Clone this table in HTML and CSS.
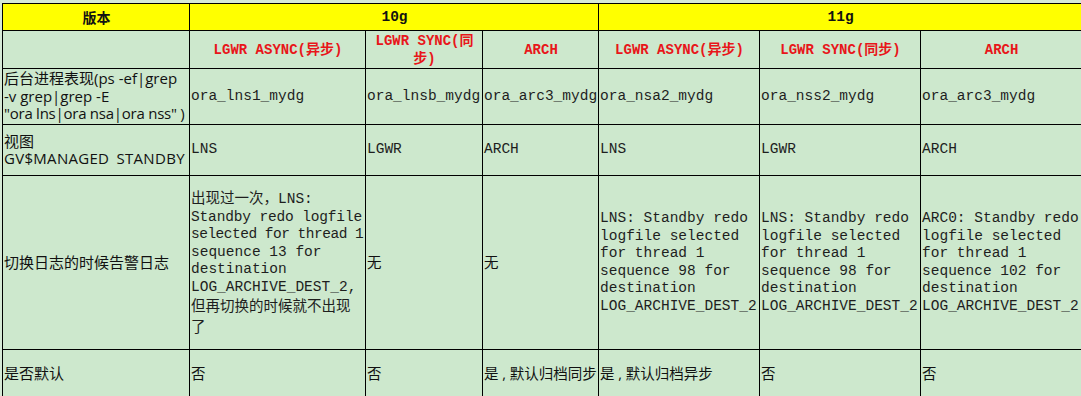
FILE: index.html
```html
<!DOCTYPE html>
<html lang="zh-CN">
<head>
<meta charset="utf-8">
<title>Data Guard 传输模式对比</title>
<link rel="stylesheet" href="styles.css">
</head>
<body>
<table class="cmp">
  <colgroup>
    <col class="c1"><col class="c2"><col class="c3"><col class="c4"><col class="c5"><col class="c6"><col class="c7">
  </colgroup>
  <tr class="r1">
    <th class="h-ver">版本</th>
    <th class="h-mono" colspan="3">10g</th>
    <th class="h-mono" colspan="3">11g</th>
  </tr>
  <tr class="r2">
    <td></td>
    <td class="mode">LGWR ASYNC(异步)</td>
    <td class="mode">LGWR SYNC(同步)</td>
    <td class="mode">ARCH</td>
    <td class="mode">LGWR ASYNC(异步)</td>
    <td class="mode">LGWR SYNC(同步)</td>
    <td class="mode">ARCH</td>
  </tr>
  <tr class="r3">
    <td class="sans lead">后台进程表现(ps -ef|grep<br>-v grep|grep -E<br><span class="fit">"ora lns|ora nsa|ora nss" )</span></td>
    <td class="mono">ora_lns1_mydg</td>
    <td class="mono">ora_lnsb_mydg</td>
    <td class="mono">ora_arc3_mydg</td>
    <td class="mono">ora_nsa2_mydg</td>
    <td class="mono">ora_nss2_mydg</td>
    <td class="mono">ora_arc3_mydg</td>
  </tr>
  <tr class="r4">
    <td class="sans lead">视图<br><span class="wide">GV$MANAGED STANDBY</span></td>
    <td class="mono">LNS</td>
    <td class="mono">LGWR</td>
    <td class="mono">ARCH</td>
    <td class="mono">LNS</td>
    <td class="mono">LGWR</td>
    <td class="mono">ARCH</td>
  </tr>
  <tr class="r5">
    <td class="sans lead">切换日志的时候告警日志</td>
    <td class="mono"><span class="cjk">出现过一次，</span>LNS:<br><span class="t1">Standby redo logfile</span><br><span class="t2">selected for thread 1</span><br>sequence 13 for<br>destination<br>LOG_ARCHIVE_DEST_2,<br><span class="cjk">但再切换的时候就不出现<br>了</span></td>
    <td class="sans">无</td>
    <td class="sans">无</td>
    <td class="mono">LNS: Standby redo<br>logfile selected<br>for thread 1<br>sequence 98 for<br>destination<br>LOG_ARCHIVE_DEST_2</td>
    <td class="mono">LNS: Standby redo<br>logfile selected<br>for thread 1<br>sequence 98 for<br>destination<br>LOG_ARCHIVE_DEST_2</td>
    <td class="mono">ARC0: Standby redo<br>logfile selected<br>for thread 1<br>sequence 102 for<br>destination<br>LOG_ARCHIVE_DEST_2</td>
  </tr>
  <tr class="r6">
    <td class="sans lead">是否默认</td>
    <td class="sans">否</td>
    <td class="sans">否</td>
    <td class="sans">是 , 默认归档同步</td>
    <td class="sans">是 , 默认归档异步</td>
    <td class="sans">否</td>
    <td class="sans">否</td>
  </tr>
</table>
</body>
</html>
```
FILE: styles.css
```css
* { box-sizing: border-box; }
html, body { margin: 0; }
body {
  width: 1081px;
  height: 396px;
  overflow: hidden;
  padding: 3px 0 0 2px;
  background: #d6ead6;
}
.cmp {
  border-collapse: collapse;
  table-layout: fixed;
  width: 1079px;
  background: #cde8cd;
  color: #111;
}
.c1 { width: 187px; }
.c2 { width: 176px; }
.c3 { width: 117px; }
.c4 { width: 116px; }
.c5 { width: 161px; }
.c6 { width: 161px; }
.c7 { width: 161px; }

.cmp td, .cmp th {
  border: 1px solid #000;
  padding: 0 0 0 1px;
  vertical-align: middle;
  text-align: left;
  white-space: nowrap;
  overflow: hidden;
}
.r1 { height: 27px; }
.r2 { height: 38px; }
.r3 { height: 56px; }
.r4 { height: 51px; }
.r5 { height: 174px; }
.r6 { height: 48px; }

.r1 th { background: #ffff00; text-align: center; }
.h-ver {
  font-family: "Noto Sans CJK SC", sans-serif;
  font-size: 14px;
  font-weight: bold;
}
.h-mono {
  font-family: "Liberation Mono", "Noto Sans CJK SC", monospace;
  font-size: 14.5px;
  font-weight: bold;
}
.mode {
  font-family: "Liberation Mono", "Noto Sans CJK SC", monospace;
  font-size: 14px;
  font-weight: bold;
  color: #e8161a;
  text-align: center !important;
  white-space: normal !important;
  line-height: 18px;
}
.mono {
  font-family: "Liberation Mono", "Noto Sans CJK SC", monospace;
  font-size: 14.5px;
  line-height: 17.5px;
  color: #1e1e1e;
}
.sans {
  font-family: "Open Sans", "Noto Sans CJK SC", sans-serif;
  font-size: 14.5px;
  line-height: 17.5px;
  color: #111;
}
.lead { font-size: 15px; }
.fit { letter-spacing: -0.25px; }
.cjk {
  font-family: "Noto Sans CJK SC", sans-serif;
  font-size: 14.5px;
}
.wide { letter-spacing: 0.3px; word-spacing: 3px; }
.t1 { letter-spacing: -0.15px; }
.t2 { letter-spacing: -0.5px; }
```
